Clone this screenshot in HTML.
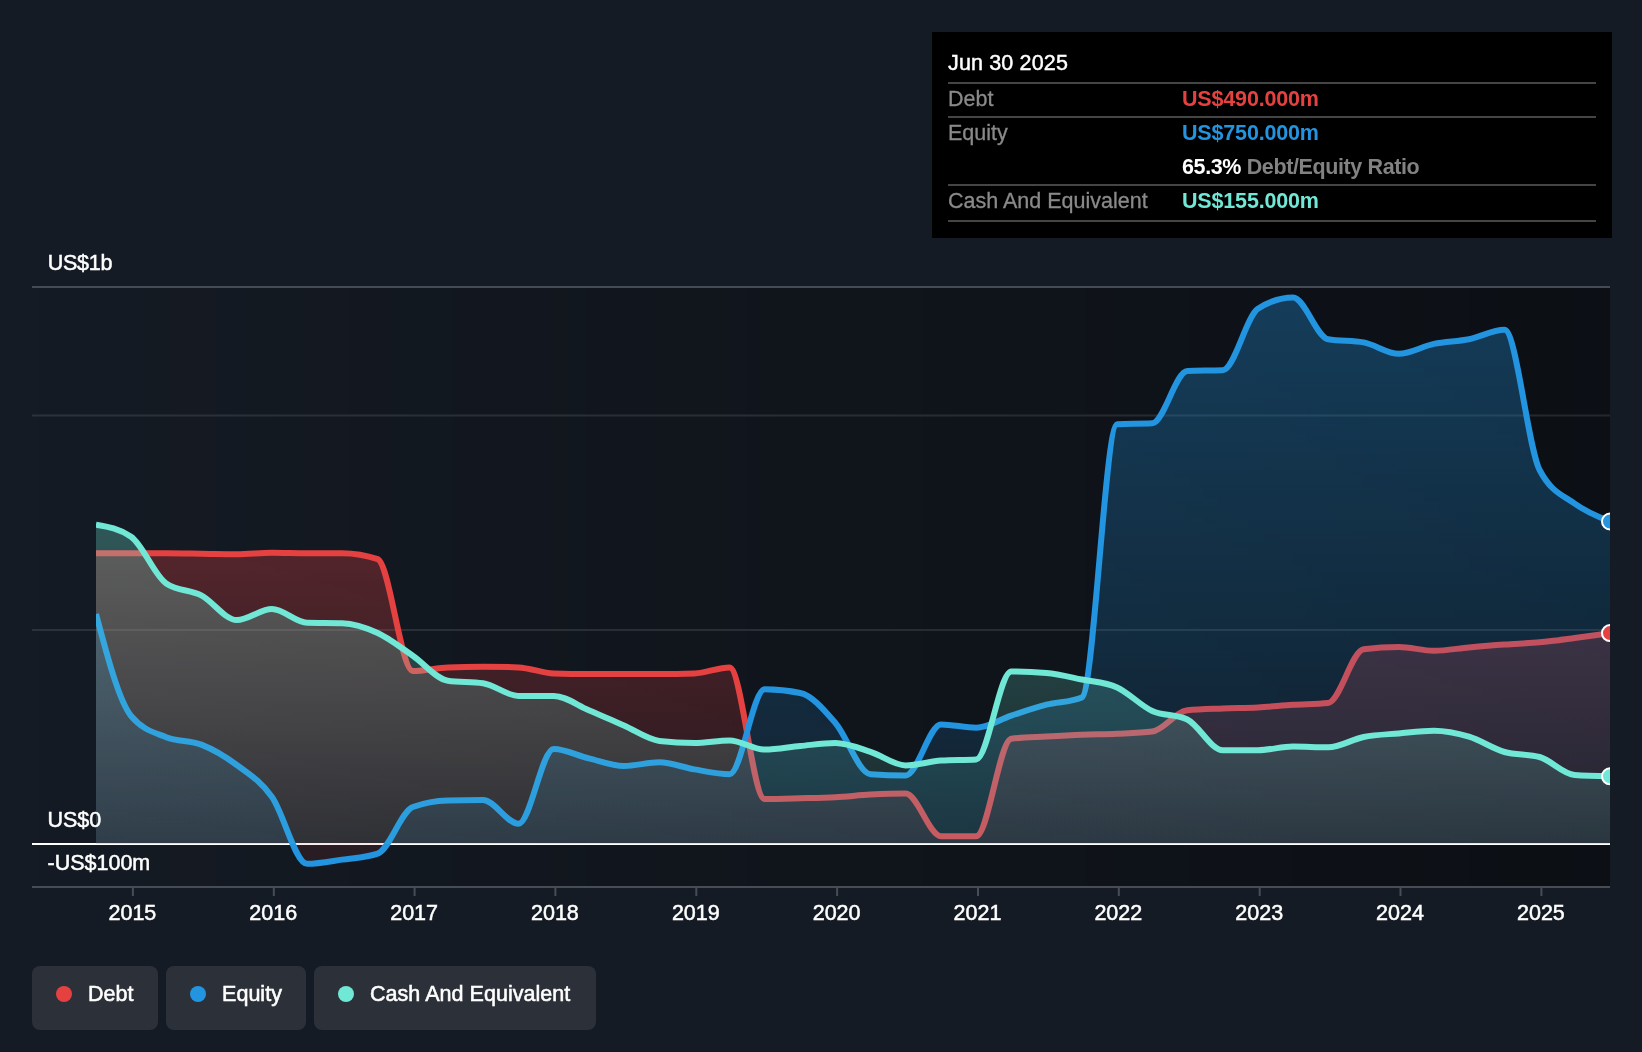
<!DOCTYPE html>
<html><head><meta charset="utf-8"><title>Debt to Equity History</title>
<style>
html,body{margin:0;padding:0;background:#151b24;}
body{width:1642px;height:1052px;position:relative;overflow:hidden;font-family:"Liberation Sans",sans-serif;}
svg{position:absolute;left:0;top:0;will-change:transform;}
svg text{font-family:"Liberation Sans",sans-serif;font-size:21.5px;fill:#fff;stroke:#fff;stroke-width:0.5px;}
.tip{will-change:transform;position:absolute;left:932px;top:32px;width:680px;height:206px;background:#000;color:#fff;font-size:21.5px;}
.tip .row{position:absolute;left:16px;width:648px;height:34px;line-height:34px;white-space:nowrap;}
.tip .sep{position:absolute;left:16px;width:648px;height:2px;background:#454545;}
.tip .lab{position:absolute;left:0;color:#8a8a8a;-webkit-text-stroke:0.3px #8a8a8a;}
.tip .val{position:absolute;left:234px;font-weight:bold;letter-spacing:-0.17px;}
.leg{will-change:transform;position:absolute;top:966px;height:64px;border-radius:8px;background:#2c3039;color:#fff;font-size:21.5px;line-height:64px;white-space:nowrap;}
.leg i{position:absolute;left:24px;top:20px;width:16px;height:16px;border-radius:8px;}
.leg span{position:absolute;left:56px;top:-3.6px;letter-spacing:0.04px;-webkit-text-stroke:0.55px #fff;}
</style></head><body>
<svg width="1642" height="1052" viewBox="0 0 1642 1052">
<defs>
<linearGradient id="bg" x1="0" y1="0" x2="1" y2="0"><stop offset="0" stop-color="#000" stop-opacity="0"/><stop offset="1" stop-color="#000" stop-opacity="0.42"/></linearGradient>
<linearGradient id="gd" x1="0" y1="0" x2="0" y2="1"><stop offset="0" stop-color="#e64141" stop-opacity="0.30"/><stop offset="1" stop-color="#e64141" stop-opacity="0.1"/></linearGradient>
<linearGradient id="gc" x1="0" y1="0" x2="0" y2="1"><stop offset="0" stop-color="#71e7d6" stop-opacity="0.30"/><stop offset="1" stop-color="#71e7d6" stop-opacity="0.1"/></linearGradient>
<linearGradient id="ge" x1="0" y1="0" x2="0" y2="1"><stop offset="0" stop-color="#2394df" stop-opacity="0.33"/><stop offset="1" stop-color="#2394df" stop-opacity="0.1"/></linearGradient>
<linearGradient id="gn" x1="0" y1="0" x2="0" y2="1"><stop offset="0" stop-color="#e64141" stop-opacity="0.35"/><stop offset="1" stop-color="#e64141" stop-opacity="0.1"/></linearGradient>
<clipPath id="plot"><rect x="96" y="280" width="1514" height="620"/></clipPath>
<clipPath id="pos"><rect x="32" y="280" width="1578" height="564"/></clipPath>
<clipPath id="neg"><rect x="32" y="844" width="1578" height="60"/></clipPath>
</defs>
<rect x="32" y="287" width="1578" height="600" fill="url(#bg)"/>
<rect x="32" y="286" width="1578" height="2" fill="#454a53"/>
<rect x="32" y="414.5" width="1578" height="2" fill="#fff" fill-opacity="0.1"/>
<rect x="32" y="629" width="1578" height="2" fill="#fff" fill-opacity="0.1"/>
<rect x="32" y="886" width="1578" height="2" fill="#474c55"/>
<rect x="131.9" y="887" width="2" height="9" fill="#474c55"/><rect x="272.8" y="887" width="2" height="9" fill="#474c55"/><rect x="413.6" y="887" width="2" height="9" fill="#474c55"/><rect x="554.4" y="887" width="2" height="9" fill="#474c55"/><rect x="695.3" y="887" width="2" height="9" fill="#474c55"/><rect x="836.1" y="887" width="2" height="9" fill="#474c55"/><rect x="977.0" y="887" width="2" height="9" fill="#474c55"/><rect x="1117.8" y="887" width="2" height="9" fill="#474c55"/><rect x="1258.7" y="887" width="2" height="9" fill="#474c55"/><rect x="1399.5" y="887" width="2" height="9" fill="#474c55"/><rect x="1540.4" y="887" width="2" height="9" fill="#474c55"/>
<rect x="32" y="843" width="1578" height="2" fill="#fff"/>
<g clip-path="url(#plot)" fill="none" stroke-width="6" stroke-linejoin="round" stroke-linecap="butt">
<path d="M96.00,553.30C107.70,553.30,119.40,553.30,131.10,553.30C142.80,553.30,154.50,553.30,166.20,553.30C177.90,553.30,189.60,553.55,201.30,553.70C213.13,553.85,224.97,554.20,236.80,554.20C248.53,554.20,260.27,552.80,272.00,552.80C283.70,552.80,295.40,553.30,307.10,553.30C318.80,553.30,330.50,553.30,342.20,553.30C354.03,553.30,365.87,555.27,377.70,559.20C389.40,563.09,401.10,671.00,412.80,671.00C424.50,671.00,436.20,667.87,447.90,667.40C459.60,666.93,471.30,666.70,483.00,666.70C494.83,666.70,506.67,666.93,518.50,667.40C530.23,667.86,541.97,673.17,553.70,673.50C565.40,673.83,577.10,674.00,588.80,674.00C600.50,674.00,612.20,674.00,623.90,674.00C635.73,674.00,647.57,674.00,659.40,674.00C671.10,674.00,682.80,673.83,694.50,673.50C706.20,673.17,717.90,667.40,729.60,667.40C741.30,667.40,753.00,799.00,764.70,799.00C776.53,799.00,788.37,798.60,800.20,798.30C811.93,798.00,823.67,797.82,835.40,797.20C847.10,796.58,858.80,795.22,870.50,794.60C882.20,793.98,893.90,793.50,905.60,793.50C917.43,793.50,929.27,836.20,941.10,836.20C952.80,836.20,964.50,836.20,976.20,836.20C987.90,836.20,999.60,740.17,1011.30,738.70C1023.00,737.23,1034.70,737.16,1046.40,736.50C1058.23,735.83,1070.07,735.17,1081.90,734.70C1093.63,734.24,1105.37,734.23,1117.10,733.70C1128.80,733.17,1140.50,732.97,1152.20,731.50C1163.90,730.03,1175.60,711.49,1187.30,710.30C1199.13,709.10,1210.97,708.98,1222.80,708.50C1234.50,708.02,1246.20,708.02,1257.90,707.40C1269.60,706.78,1281.30,705.53,1293.00,704.80C1304.70,704.07,1316.40,704.20,1328.10,703.00C1339.93,701.79,1351.77,650.85,1363.60,649.30C1375.33,647.77,1387.07,647.00,1398.80,647.00C1410.50,647.00,1422.20,650.80,1433.90,650.80C1445.60,650.80,1457.30,648.45,1469.00,647.40C1480.83,646.34,1492.67,645.35,1504.50,644.50C1516.20,643.66,1527.90,643.38,1539.60,642.30C1551.30,641.22,1563.00,639.53,1574.70,638.00C1586.47,636.46,1598.23,634.78,1610.00,633.10L1610.00,844L96.00,844Z" fill="url(#gd)"/>
<path d="M96.00,553.30C107.70,553.30,119.40,553.30,131.10,553.30C142.80,553.30,154.50,553.30,166.20,553.30C177.90,553.30,189.60,553.55,201.30,553.70C213.13,553.85,224.97,554.20,236.80,554.20C248.53,554.20,260.27,552.80,272.00,552.80C283.70,552.80,295.40,553.30,307.10,553.30C318.80,553.30,330.50,553.30,342.20,553.30C354.03,553.30,365.87,555.27,377.70,559.20C389.40,563.09,401.10,671.00,412.80,671.00C424.50,671.00,436.20,667.87,447.90,667.40C459.60,666.93,471.30,666.70,483.00,666.70C494.83,666.70,506.67,666.93,518.50,667.40C530.23,667.86,541.97,673.17,553.70,673.50C565.40,673.83,577.10,674.00,588.80,674.00C600.50,674.00,612.20,674.00,623.90,674.00C635.73,674.00,647.57,674.00,659.40,674.00C671.10,674.00,682.80,673.83,694.50,673.50C706.20,673.17,717.90,667.40,729.60,667.40C741.30,667.40,753.00,799.00,764.70,799.00C776.53,799.00,788.37,798.60,800.20,798.30C811.93,798.00,823.67,797.82,835.40,797.20C847.10,796.58,858.80,795.22,870.50,794.60C882.20,793.98,893.90,793.50,905.60,793.50C917.43,793.50,929.27,836.20,941.10,836.20C952.80,836.20,964.50,836.20,976.20,836.20C987.90,836.20,999.60,740.17,1011.30,738.70C1023.00,737.23,1034.70,737.16,1046.40,736.50C1058.23,735.83,1070.07,735.17,1081.90,734.70C1093.63,734.24,1105.37,734.23,1117.10,733.70C1128.80,733.17,1140.50,732.97,1152.20,731.50C1163.90,730.03,1175.60,711.49,1187.30,710.30C1199.13,709.10,1210.97,708.98,1222.80,708.50C1234.50,708.02,1246.20,708.02,1257.90,707.40C1269.60,706.78,1281.30,705.53,1293.00,704.80C1304.70,704.07,1316.40,704.20,1328.10,703.00C1339.93,701.79,1351.77,650.85,1363.60,649.30C1375.33,647.77,1387.07,647.00,1398.80,647.00C1410.50,647.00,1422.20,650.80,1433.90,650.80C1445.60,650.80,1457.30,648.45,1469.00,647.40C1480.83,646.34,1492.67,645.35,1504.50,644.50C1516.20,643.66,1527.90,643.38,1539.60,642.30C1551.30,641.22,1563.00,639.53,1574.70,638.00C1586.47,636.46,1598.23,634.78,1610.00,633.10" stroke="#e64141"/>
<path d="M96.00,614.00C107.70,657.93,119.40,701.87,131.10,716.00C142.80,730.13,154.50,732.43,166.20,737.20C177.90,741.97,189.60,740.02,201.30,744.60C213.13,749.24,224.97,756.21,236.80,765.00C248.53,773.71,260.27,780.49,272.00,797.00C283.70,813.46,295.40,863.80,307.10,863.80C318.80,863.80,330.50,861.29,342.20,859.60C354.03,857.89,365.87,857.60,377.70,853.60C389.40,849.65,401.10,811.40,412.80,807.00C424.50,802.60,436.20,800.67,447.90,800.40C459.60,800.13,471.30,800.00,483.00,800.00C494.83,800.00,506.67,823.70,518.50,823.70C530.23,823.70,541.97,749.00,553.70,749.00C565.40,749.00,577.10,755.57,588.80,758.40C600.50,761.23,612.20,766.00,623.90,766.00C635.73,766.00,647.57,762.30,659.40,762.30C671.10,762.30,682.80,767.42,694.50,769.40C706.20,771.38,717.90,774.20,729.60,774.20C741.30,774.20,753.00,689.30,764.70,689.30C776.53,689.30,788.37,690.53,800.20,693.00C811.93,695.45,823.67,709.44,835.40,723.00C847.10,736.52,858.80,773.33,870.50,774.20C882.20,775.07,893.90,775.50,905.60,775.50C917.43,775.50,929.27,724.40,941.10,724.40C952.80,724.40,964.50,727.70,976.20,727.70C987.90,727.70,999.60,719.43,1011.30,715.60C1023.00,711.77,1034.70,707.72,1046.40,704.70C1058.23,701.64,1070.07,702.27,1081.90,697.40C1093.63,692.57,1105.37,424.80,1117.10,424.20C1128.80,423.60,1140.50,423.90,1152.20,423.30C1163.90,422.70,1175.60,371.53,1187.30,371.00C1199.13,370.47,1210.97,370.73,1222.80,370.20C1234.50,369.67,1246.20,316.33,1257.90,308.80C1269.60,301.27,1281.30,297.50,1293.00,297.50C1304.70,297.50,1316.40,337.09,1328.10,339.20C1339.93,341.33,1351.77,340.27,1363.60,342.40C1375.33,344.52,1387.07,353.80,1398.80,353.80C1410.50,353.80,1422.20,346.33,1433.90,343.90C1445.60,341.47,1457.30,341.54,1469.00,339.20C1480.83,336.83,1492.67,329.70,1504.50,329.70C1516.20,329.70,1527.90,447.53,1539.60,470.00C1551.30,492.47,1563.00,495.13,1574.70,503.70C1586.47,512.32,1598.23,516.91,1610.00,521.50L1610.00,844L96.00,844Z" fill="url(#ge)" clip-path="url(#pos)"/>
<path d="M96.00,614.00C107.70,657.93,119.40,701.87,131.10,716.00C142.80,730.13,154.50,732.43,166.20,737.20C177.90,741.97,189.60,740.02,201.30,744.60C213.13,749.24,224.97,756.21,236.80,765.00C248.53,773.71,260.27,780.49,272.00,797.00C283.70,813.46,295.40,863.80,307.10,863.80C318.80,863.80,330.50,861.29,342.20,859.60C354.03,857.89,365.87,857.60,377.70,853.60C389.40,849.65,401.10,811.40,412.80,807.00C424.50,802.60,436.20,800.67,447.90,800.40C459.60,800.13,471.30,800.00,483.00,800.00C494.83,800.00,506.67,823.70,518.50,823.70C530.23,823.70,541.97,749.00,553.70,749.00C565.40,749.00,577.10,755.57,588.80,758.40C600.50,761.23,612.20,766.00,623.90,766.00C635.73,766.00,647.57,762.30,659.40,762.30C671.10,762.30,682.80,767.42,694.50,769.40C706.20,771.38,717.90,774.20,729.60,774.20C741.30,774.20,753.00,689.30,764.70,689.30C776.53,689.30,788.37,690.53,800.20,693.00C811.93,695.45,823.67,709.44,835.40,723.00C847.10,736.52,858.80,773.33,870.50,774.20C882.20,775.07,893.90,775.50,905.60,775.50C917.43,775.50,929.27,724.40,941.10,724.40C952.80,724.40,964.50,727.70,976.20,727.70C987.90,727.70,999.60,719.43,1011.30,715.60C1023.00,711.77,1034.70,707.72,1046.40,704.70C1058.23,701.64,1070.07,702.27,1081.90,697.40C1093.63,692.57,1105.37,424.80,1117.10,424.20C1128.80,423.60,1140.50,423.90,1152.20,423.30C1163.90,422.70,1175.60,371.53,1187.30,371.00C1199.13,370.47,1210.97,370.73,1222.80,370.20C1234.50,369.67,1246.20,316.33,1257.90,308.80C1269.60,301.27,1281.30,297.50,1293.00,297.50C1304.70,297.50,1316.40,337.09,1328.10,339.20C1339.93,341.33,1351.77,340.27,1363.60,342.40C1375.33,344.52,1387.07,353.80,1398.80,353.80C1410.50,353.80,1422.20,346.33,1433.90,343.90C1445.60,341.47,1457.30,341.54,1469.00,339.20C1480.83,336.83,1492.67,329.70,1504.50,329.70C1516.20,329.70,1527.90,447.53,1539.60,470.00C1551.30,492.47,1563.00,495.13,1574.70,503.70C1586.47,512.32,1598.23,516.91,1610.00,521.50L1610.00,844L96.00,844Z" fill="url(#gn)" clip-path="url(#neg)"/>
<path d="M96.00,614.00C107.70,657.93,119.40,701.87,131.10,716.00C142.80,730.13,154.50,732.43,166.20,737.20C177.90,741.97,189.60,740.02,201.30,744.60C213.13,749.24,224.97,756.21,236.80,765.00C248.53,773.71,260.27,780.49,272.00,797.00C283.70,813.46,295.40,863.80,307.10,863.80C318.80,863.80,330.50,861.29,342.20,859.60C354.03,857.89,365.87,857.60,377.70,853.60C389.40,849.65,401.10,811.40,412.80,807.00C424.50,802.60,436.20,800.67,447.90,800.40C459.60,800.13,471.30,800.00,483.00,800.00C494.83,800.00,506.67,823.70,518.50,823.70C530.23,823.70,541.97,749.00,553.70,749.00C565.40,749.00,577.10,755.57,588.80,758.40C600.50,761.23,612.20,766.00,623.90,766.00C635.73,766.00,647.57,762.30,659.40,762.30C671.10,762.30,682.80,767.42,694.50,769.40C706.20,771.38,717.90,774.20,729.60,774.20C741.30,774.20,753.00,689.30,764.70,689.30C776.53,689.30,788.37,690.53,800.20,693.00C811.93,695.45,823.67,709.44,835.40,723.00C847.10,736.52,858.80,773.33,870.50,774.20C882.20,775.07,893.90,775.50,905.60,775.50C917.43,775.50,929.27,724.40,941.10,724.40C952.80,724.40,964.50,727.70,976.20,727.70C987.90,727.70,999.60,719.43,1011.30,715.60C1023.00,711.77,1034.70,707.72,1046.40,704.70C1058.23,701.64,1070.07,702.27,1081.90,697.40C1093.63,692.57,1105.37,424.80,1117.10,424.20C1128.80,423.60,1140.50,423.90,1152.20,423.30C1163.90,422.70,1175.60,371.53,1187.30,371.00C1199.13,370.47,1210.97,370.73,1222.80,370.20C1234.50,369.67,1246.20,316.33,1257.90,308.80C1269.60,301.27,1281.30,297.50,1293.00,297.50C1304.70,297.50,1316.40,337.09,1328.10,339.20C1339.93,341.33,1351.77,340.27,1363.60,342.40C1375.33,344.52,1387.07,353.80,1398.80,353.80C1410.50,353.80,1422.20,346.33,1433.90,343.90C1445.60,341.47,1457.30,341.54,1469.00,339.20C1480.83,336.83,1492.67,329.70,1504.50,329.70C1516.20,329.70,1527.90,447.53,1539.60,470.00C1551.30,492.47,1563.00,495.13,1574.70,503.70C1586.47,512.32,1598.23,516.91,1610.00,521.50" stroke="#2394df"/>
<path d="M96.00,524.60C107.70,526.62,119.40,528.63,131.10,536.70C142.80,544.77,154.50,575.57,166.20,583.50C177.90,591.43,189.60,589.37,201.30,595.40C213.13,601.49,224.97,620.00,236.80,620.00C248.53,620.00,260.27,609.00,272.00,609.00C283.70,609.00,295.40,622.53,307.10,622.80C318.80,623.07,330.50,622.93,342.20,623.20C354.03,623.47,365.87,627.53,377.70,633.00C389.40,638.41,401.10,647.75,412.80,655.70C424.50,663.65,436.20,679.03,447.90,680.70C459.60,682.37,471.30,681.53,483.00,683.20C494.83,684.89,506.67,695.90,518.50,695.90C530.23,695.90,541.97,695.90,553.70,695.90C565.40,695.90,577.10,705.27,588.80,710.20C600.50,715.13,612.20,720.41,623.90,725.50C635.73,730.65,647.57,739.48,659.40,740.90C671.10,742.30,682.80,743.00,694.50,743.00C706.20,743.00,717.90,740.40,729.60,740.40C741.30,740.40,753.00,749.60,764.70,749.60C776.53,749.60,788.37,747.10,800.20,746.00C811.93,744.91,823.67,743.00,835.40,743.00C847.10,743.00,858.80,748.07,870.50,751.80C882.20,755.53,893.90,765.40,905.60,765.40C917.43,765.40,929.27,761.34,941.10,760.60C952.80,759.87,964.50,760.23,976.20,759.50C987.90,758.77,999.60,671.40,1011.30,671.40C1023.00,671.40,1034.70,671.90,1046.40,672.90C1058.23,673.91,1070.07,677.07,1081.90,679.50C1093.63,681.91,1105.37,682.14,1117.10,687.40C1128.80,692.65,1140.50,705.65,1152.20,711.00C1163.90,716.35,1175.60,713.83,1187.30,719.50C1199.13,725.23,1210.97,750.20,1222.80,750.20C1234.50,750.20,1246.20,750.20,1257.90,750.20C1269.60,750.20,1281.30,746.50,1293.00,746.50C1304.70,746.50,1316.40,747.30,1328.10,747.30C1339.93,747.30,1351.77,739.32,1363.60,737.00C1375.33,734.70,1387.07,734.43,1398.80,733.40C1410.50,732.37,1422.20,730.80,1433.90,730.80C1445.60,730.80,1457.30,733.20,1469.00,736.70C1480.83,740.24,1492.67,748.63,1504.50,752.00C1516.20,755.33,1527.90,753.67,1539.60,757.00C1551.30,760.33,1563.00,774.14,1574.70,775.00C1586.47,775.87,1598.23,776.08,1610.00,776.30L1610.00,844L96.00,844Z" fill="url(#gc)"/>
<path d="M96.00,524.60C107.70,526.62,119.40,528.63,131.10,536.70C142.80,544.77,154.50,575.57,166.20,583.50C177.90,591.43,189.60,589.37,201.30,595.40C213.13,601.49,224.97,620.00,236.80,620.00C248.53,620.00,260.27,609.00,272.00,609.00C283.70,609.00,295.40,622.53,307.10,622.80C318.80,623.07,330.50,622.93,342.20,623.20C354.03,623.47,365.87,627.53,377.70,633.00C389.40,638.41,401.10,647.75,412.80,655.70C424.50,663.65,436.20,679.03,447.90,680.70C459.60,682.37,471.30,681.53,483.00,683.20C494.83,684.89,506.67,695.90,518.50,695.90C530.23,695.90,541.97,695.90,553.70,695.90C565.40,695.90,577.10,705.27,588.80,710.20C600.50,715.13,612.20,720.41,623.90,725.50C635.73,730.65,647.57,739.48,659.40,740.90C671.10,742.30,682.80,743.00,694.50,743.00C706.20,743.00,717.90,740.40,729.60,740.40C741.30,740.40,753.00,749.60,764.70,749.60C776.53,749.60,788.37,747.10,800.20,746.00C811.93,744.91,823.67,743.00,835.40,743.00C847.10,743.00,858.80,748.07,870.50,751.80C882.20,755.53,893.90,765.40,905.60,765.40C917.43,765.40,929.27,761.34,941.10,760.60C952.80,759.87,964.50,760.23,976.20,759.50C987.90,758.77,999.60,671.40,1011.30,671.40C1023.00,671.40,1034.70,671.90,1046.40,672.90C1058.23,673.91,1070.07,677.07,1081.90,679.50C1093.63,681.91,1105.37,682.14,1117.10,687.40C1128.80,692.65,1140.50,705.65,1152.20,711.00C1163.90,716.35,1175.60,713.83,1187.30,719.50C1199.13,725.23,1210.97,750.20,1222.80,750.20C1234.50,750.20,1246.20,750.20,1257.90,750.20C1269.60,750.20,1281.30,746.50,1293.00,746.50C1304.70,746.50,1316.40,747.30,1328.10,747.30C1339.93,747.30,1351.77,739.32,1363.60,737.00C1375.33,734.70,1387.07,734.43,1398.80,733.40C1410.50,732.37,1422.20,730.80,1433.90,730.80C1445.60,730.80,1457.30,733.20,1469.00,736.70C1480.83,740.24,1492.67,748.63,1504.50,752.00C1516.20,755.33,1527.90,753.67,1539.60,757.00C1551.30,760.33,1563.00,774.14,1574.70,775.00C1586.47,775.87,1598.23,776.08,1610.00,776.30" stroke="#71e7d6"/>
</g>
<g clip-path="url(#plot)" stroke="#fff" stroke-width="2">
<circle cx="1610" cy="633.1" r="8" fill="#e64141"/>
<circle cx="1610" cy="521.5" r="8" fill="#2394df"/>
<circle cx="1610" cy="776.3" r="8" fill="#71e7d6"/>
</g>
<g>
<text x="47.8" y="270" letter-spacing="-0.3">US$1b</text>
<text x="47.5" y="827">US$0</text>
<text x="47.5" y="870">-US$100m</text>
<text x="132.4" y="919.6" text-anchor="middle">2015</text><text x="273.2" y="919.6" text-anchor="middle">2016</text><text x="414.1" y="919.6" text-anchor="middle">2017</text><text x="554.9" y="919.6" text-anchor="middle">2018</text><text x="695.8" y="919.6" text-anchor="middle">2019</text><text x="836.6" y="919.6" text-anchor="middle">2020</text><text x="977.5" y="919.6" text-anchor="middle">2021</text><text x="1118.3" y="919.6" text-anchor="middle">2022</text><text x="1259.2" y="919.6" text-anchor="middle">2023</text><text x="1400.0" y="919.6" text-anchor="middle">2024</text><text x="1540.9" y="919.6" text-anchor="middle">2025</text>
</g>
</svg>
<div class="tip">
<div class="row" style="top:14px"><span class="lab" style="color:#fff;-webkit-text-stroke:0.45px #fff;letter-spacing:0.15px">Jun 30 2025</span></div>
<div class="sep" style="top:50px"></div>
<div class="row" style="top:50px"><span class="lab">Debt</span><span class="val" style="color:#e64141">US$490.000m</span></div>
<div class="sep" style="top:84px"></div>
<div class="row" style="top:84px"><span class="lab">Equity</span><span class="val" style="color:#2394df">US$750.000m</span></div>
<div class="row" style="top:118px"><span class="val" style="letter-spacing:-0.38px">65.3% <span style="color:#828282">Debt/Equity Ratio</span></span></div>
<div class="sep" style="top:152px"></div>
<div class="row" style="top:152px"><span class="lab">Cash And Equivalent</span><span class="val" style="color:#71e7d6">US$155.000m</span></div>
<div class="sep" style="top:188px"></div>
</div>
<div class="leg" style="left:32px;width:126px"><i style="background:#e64141"></i><span>Debt</span></div>
<div class="leg" style="left:166px;width:140px"><i style="background:#2394df"></i><span>Equity</span></div>
<div class="leg" style="left:314px;width:282px"><i style="background:#71e7d6"></i><span>Cash And Equivalent</span></div>
</body></html>
